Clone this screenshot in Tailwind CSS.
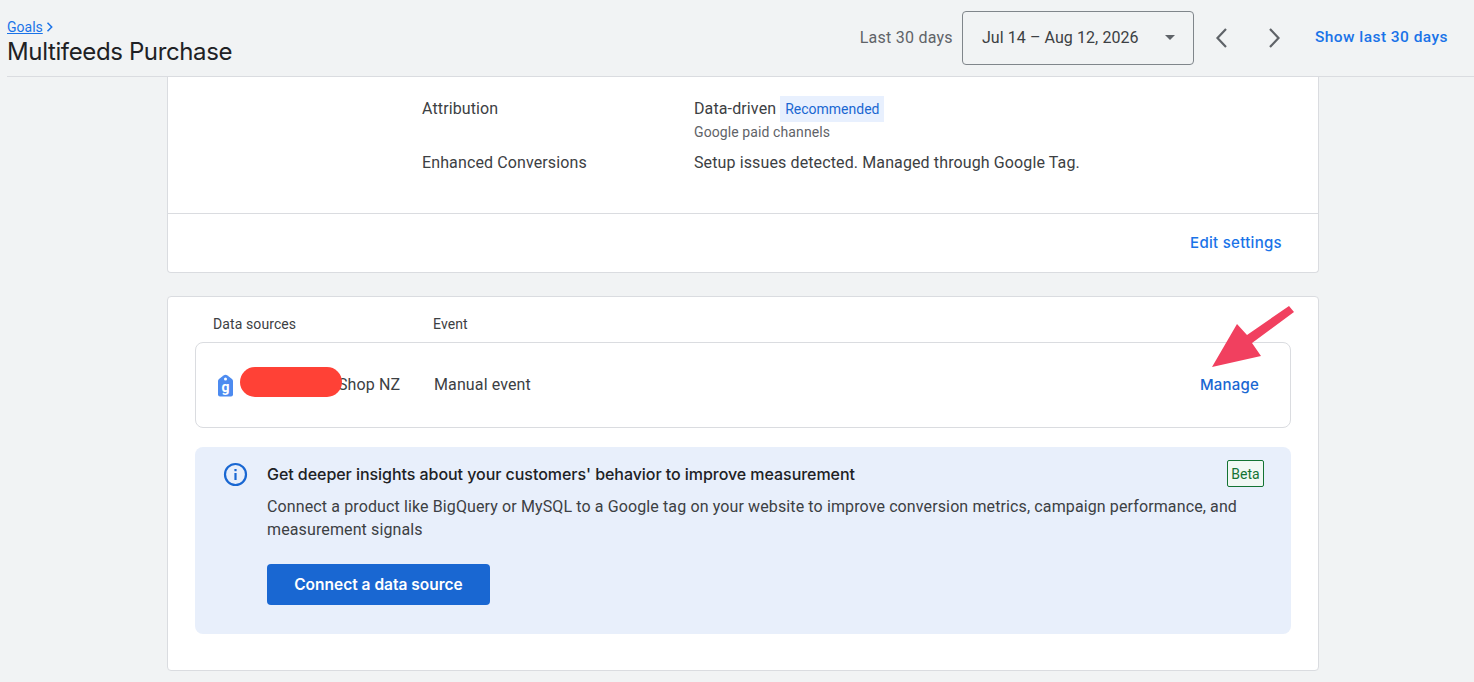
<!DOCTYPE html>
<html><head><meta charset="utf-8"><script src="https://cdn.jsdelivr.net/npm/@tailwindcss/browser@4"></script></head>
<body class="m-0">
<div class="relative w-[1474px] h-[682px] overflow-hidden bg-[#f1f3f4] font-['Roboto',sans-serif] text-[#3c4043]">
  <header class="ml-[7px] h-[77px] border-b border-[#dadce0] flex items-start justify-between pr-[26px]">
    <div class="pt-[18px]">
      <div class="flex items-center h-[18px] text-[14px] leading-[18px] text-[#1a73e8]"><a class="underline">Goals</a>
        <svg class="w-[8px] h-[10px] ml-[3px]" viewBox="0 0 8 10" fill="none" stroke="#1a73e8" stroke-width="1.5"><path d="M1.5 0.8 L5.7 5 L1.5 9.2"/></svg></div>
      <div class="font-['Inter',sans-serif] text-[24px] leading-[30px] mt-[1px] text-[#202124] tracking-[-0.37px]">Multifeeds Purchase</div>
    </div>
    <div class="flex items-center h-[76px]">
      <span class="text-[16px] tracking-[0.25px] text-[#5f6368] mr-[9px]">Last 30 days</span>
      <div class="w-[232px] h-[54px] mb-[1px] border border-[#80868b] rounded-[4px] flex items-center justify-between pl-[19px] pr-[18px] text-[16px] tracking-[0.08px] text-[#3c4043]">
        <span>Jul 14 – Aug 12, 2026</span>
        <svg class="w-[10px] h-[5px]" viewBox="0 0 10 5" fill="#5f6368"><path d="M0 0h10L5 5z"/></svg>
      </div>
      <svg class="w-[12px] h-[20px] ml-[21px] mb-[1px]" viewBox="0 0 12 20" fill="none" stroke="#5f6368" stroke-width="2.2"><path d="M11 1 L2.500 10 L11 19"/></svg>
      <svg class="w-[12px] h-[20px] ml-[42px] mb-[1px]" viewBox="0 0 12 20" fill="none" stroke="#5f6368" stroke-width="2.2"><path d="M1 1 L9.500 10 L1 19"/></svg>
      <span class="ml-[34px] text-[15.5px] font-medium tracking-[0.45px] text-[#1a73e8]">Show last 30 days</span>
    </div>
  </header>

  <main class="ml-[167px] w-[1152px]">
    <section class="h-[196px] bg-white border border-t-0 border-[#dadce0] rounded-b-[4px] flex flex-col">
      <div class="h-[137px] border-b border-[#dadce0] pl-[254px] pt-[19px] text-[16px] tracking-[0.12px]">
        <div class="flex">
          <div class="w-[272px] leading-[24px] pt-[1px]">Attribution</div>
          <div>
            <div class="flex items-center h-[26px]"><span>Data-driven</span><span class="ml-[4px] h-[26px] px-[5px] flex items-center bg-[#e8f0fe] text-[14px] tracking-normal text-[#1967d2]">Recommended</span></div>
            <div class="text-[14px] leading-[20px] text-[#5f6368] tracking-[0.1px]">Google paid channels</div>
          </div>
        </div>
        <div class="flex mt-[9px]">
          <div class="w-[272px] leading-[24px]">Enhanced Conversions</div>
          <div class="leading-[24px]">Setup issues detected. Managed through Google Tag.</div>
        </div>
      </div>
      <div class="flex-1 flex items-center justify-end pr-[36px]">
        <span class="font-['Inter',sans-serif] text-[15px] font-medium tracking-[0.3px] text-[#1a73e8]">Edit settings</span>
      </div>
    </section>

    <section class="mt-[23px] h-[375px] bg-white border border-[#dadce0] rounded-[4px] px-[27px]">
      <div class="flex h-[45px] items-start pt-[17px] text-[14px] leading-[20px] tracking-[0.1px]">
        <span class="ml-[18px] w-[220px]">Data sources</span><span>Event</span>
      </div>
      <div class="h-[86px] border border-[#dadce0] rounded-[8px] flex items-center text-[16px] tracking-[0.12px]">
        <svg class="ml-[21px] w-[17px] h-[23px]" viewBox="0 0 17 23"><path d="M6.500 1.500 Q8.500 0 10.500 1.500 L15 5 Q16 5.800 16 7 V20.500 Q16 22.500 14 22.500 H3 Q1 22.500 1 20.500 V7 Q1 5.800 2 5 Z" fill="#4d8bf0"/><circle cx="8.500" cy="5" r="1.500" fill="#fff"/><text x="8.500" y="17.500" text-anchor="middle" font-size="14" font-weight="700" font-family="Roboto" fill="#fff">g</text></svg>
        <span class="ml-[104px] w-[96px] whitespace-nowrap">Shop NZ</span>
        <span>Manual event</span>
        <span class="ml-auto mr-[31px] font-['Inter',sans-serif] text-[15px] font-medium tracking-[0.2px] text-[#1967d2]">Manage</span>
      </div>
      <div class="mt-[19px] h-[187px] bg-[#e8effb] rounded-[8px] flex pl-[28px] pr-[27px] pt-[15px]">
        <svg class="w-[25px] h-[25px] shrink-0" viewBox="0 0 25 25" fill="none"><circle cx="12.500" cy="12.500" r="10.500" stroke="#1967d2" stroke-width="2.200"/><rect x="11.400" y="11" width="2.200" height="7" fill="#1967d2"/><rect x="11.400" y="7" width="2.200" height="2.200" fill="#1967d2"/></svg>
        <div class="ml-[19px] flex-1 min-w-0">
          <div class="flex justify-between">
            <div class="font-['Inter',sans-serif] font-medium text-[16px] leading-[24px] text-[#202124] tracking-[-0.05px]">Get deeper insights about your customers' behavior to improve measurement</div>
            <span class="h-[27px] w-[37px] -mt-[2px] pt-[1px] border border-[#137333] rounded-[2px] bg-[#f1f8f4] flex items-center justify-center text-[14px] text-[#137333]">Beta</span>
          </div>
          <p class="mt-[8px] text-[16px] leading-[23px] tracking-[0.12px]">Connect a product like BigQuery or MySQL to a Google tag on your website to improve conversion metrics, campaign performance, and measurement signals</p>
          <button class="block mt-[23px] w-[223px] h-[41px] bg-[#1967d2] rounded-[4px] text-white font-['Inter',sans-serif] font-semibold text-[15.5px]">Connect a data source</button>
        </div>
      </div>
    </section>
  </main>

  <div class="absolute left-[240px] top-[367px] w-[102px] h-[30px] rounded-full bg-[#ff4136]"></div>
  <svg class="absolute left-[1205px] top-[300px] w-[95px] h-[75px]" viewBox="0 0 95 75"><path d="M84 6 L89 12 L47 43 L56 56 L7 67 L32 24 L42 35 Z" fill="#f1405f"/></svg>
</div>
</body></html>
